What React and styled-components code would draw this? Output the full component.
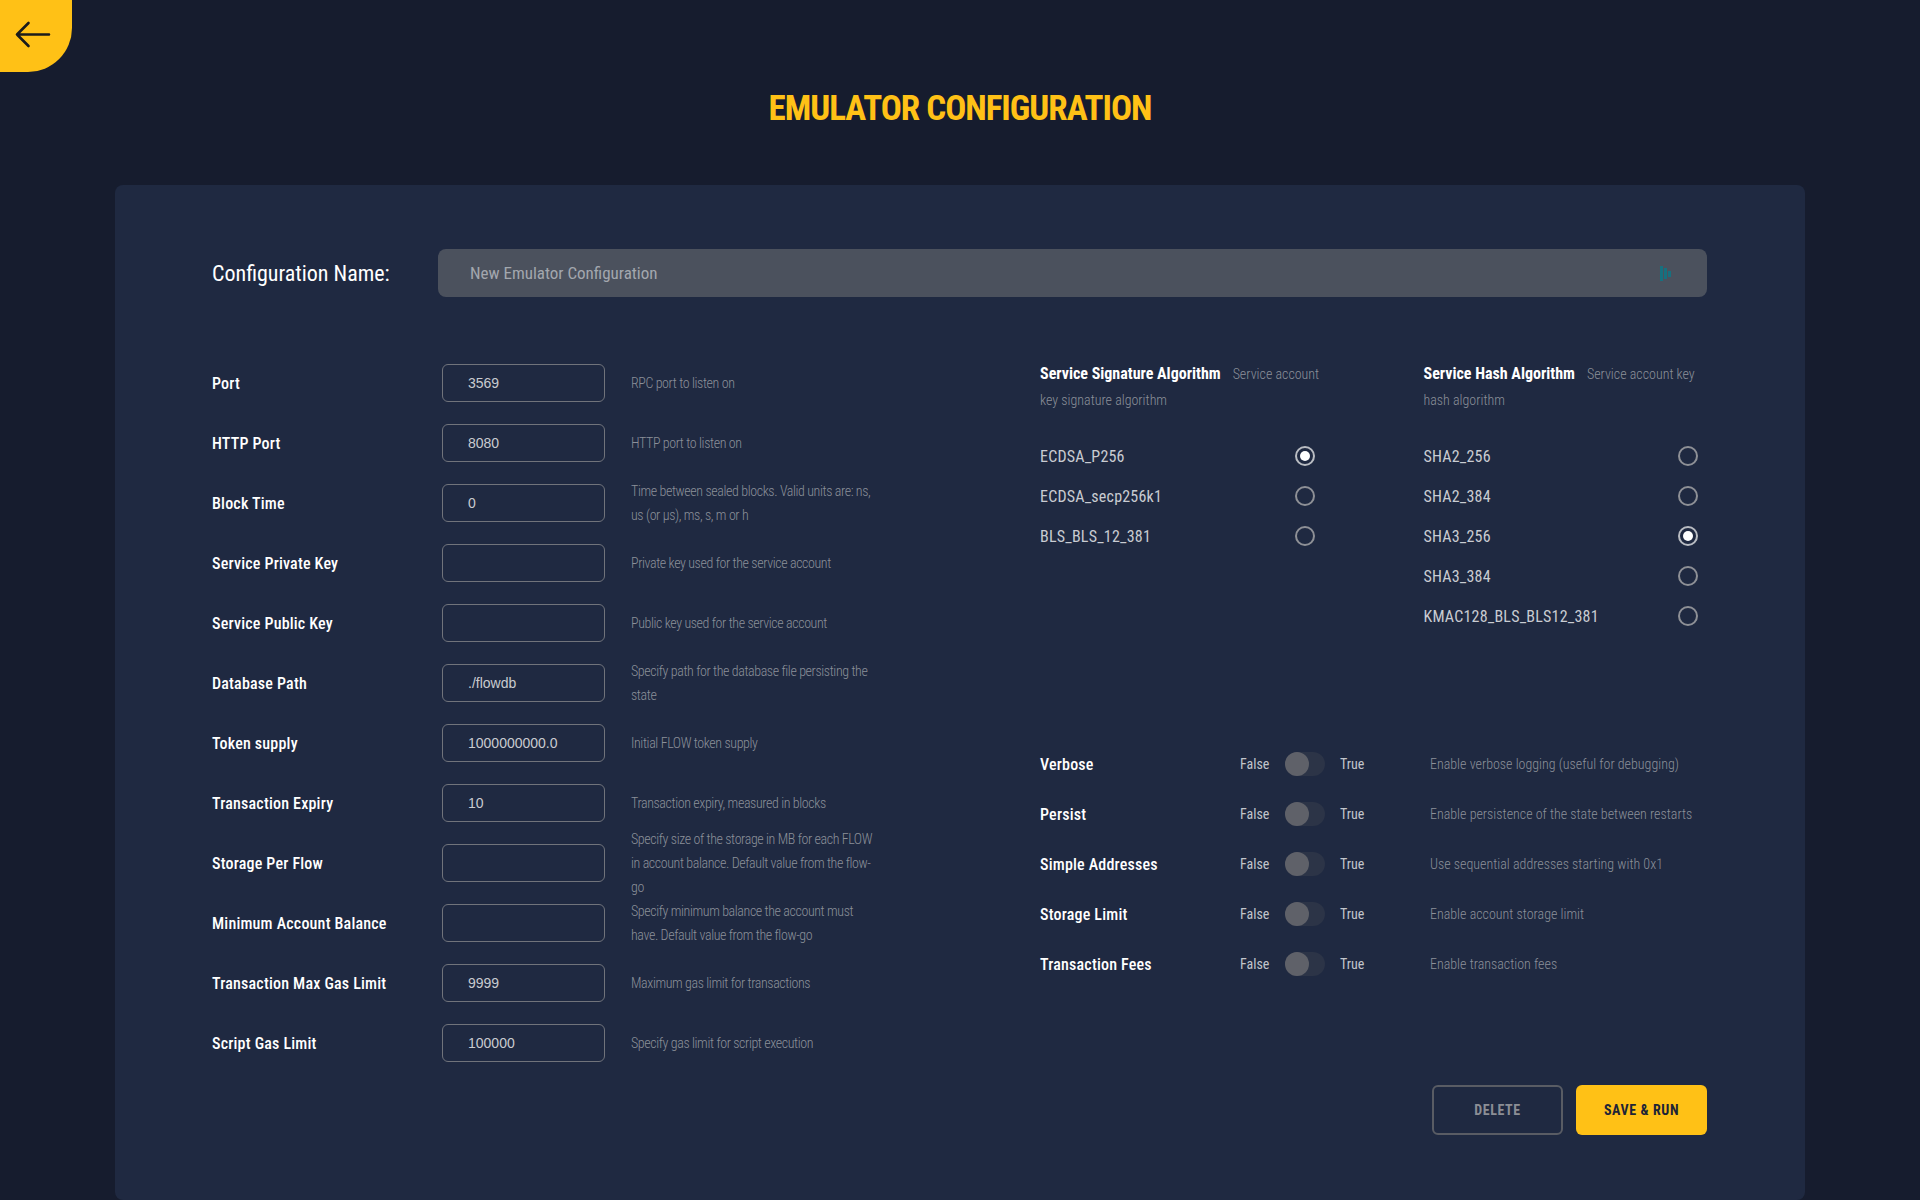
import React from "react";
import styled, { createGlobalStyle } from "styled-components";

const COND = `"Roboto Condensed", "Liberation Sans", sans-serif`;

const Global = createGlobalStyle`
  html, body { margin: 0; padding: 0; }
  body { background: #161c2e; font-family: ${COND}; }
  * { box-sizing: border-box; }
`;

const Page = styled.div`
  position: relative;
  min-height: 1200px;
  display: flex;
  flex-direction: column;
`;

const BackButton = styled.button`
  position: absolute;
  top: 0;
  left: 0;
  width: 72px;
  height: 72px;
  border: none;
  padding: 0;
  background: #ffc116;
  border-bottom-right-radius: 44px;
  display: flex;
  align-items: flex-start;
  justify-content: flex-start;
  cursor: pointer;
`;

const Header = styled.header`
  padding-top: 88px;
  height: 185px;
  display: flex;
  justify-content: center;
`;

const Title = styled.h1`
  margin: 0;
  font-family: ${COND};
  font-weight: 700;
  font-size: 35px;
  line-height: 42px;
  letter-spacing: -1px;
  color: #ffc116;
`;

const Panel = styled.main`
  margin: 0 115px;
  background: #1f2941;
  border-radius: 8px;
  padding: 64px 98px 65px 97px;
`;

const NameRow = styled.div`
  display: flex;
  align-items: center;
  height: 48px;
`;

const NameLabel = styled.label`
  width: 226px;
  flex: none;
  color: #ffffff;
  font-size: 22px;
  white-space: nowrap;
`;

const NameInputWrap = styled.div`
  position: relative;
  flex: 1;
  height: 48px;
  background: #4b515d;
  border-radius: 8px;
  display: flex;
  align-items: center;
  padding: 0 32px;
`;

const NameText = styled.span`
  color: #a3a7ae;
  font-size: 17px;
`;

const KeyBadge = styled.svg`
  position: absolute;
  right: 35px;
  top: 17px;
`;

const Body = styled.div`
  margin-top: 64px;
  display: grid;
  grid-template-columns: 828px 1fr;
  align-items: start;
`;

const FieldList = styled.div`
  padding-top: 3px;
  display: flex;
  flex-direction: column;
  gap: 22px;
`;

const FieldRow = styled.div`
  display: flex;
  align-items: center;
  height: 38px;
`;

const FieldLabel = styled.label`
  width: 230px;
  flex: none;
  color: #ffffff;
  font-size: 16px;
  font-weight: 500;
  letter-spacing: 0.2px;
  white-space: nowrap;
`;

const TextBox = styled.div`
  width: 163px;
  flex: none;
  height: 38px;
  border: 1px solid #70737b;
  border-radius: 6px;
  display: flex;
  align-items: center;
  padding: 0 25px;
  color: #c9cbd0;
  font-family: "Liberation Sans", Arial, sans-serif;
  font-size: 14px;
`;

const Help = styled.p`
  width: 277px;
  flex: none;
  margin: 0;
  padding-left: 26px;
  color: #8b9099;
  font-weight: 300;
  font-size: 14px;
  letter-spacing: -0.4px;
  line-height: 24px;
`;

const RightCol = styled.div`
  display: flex;
  flex-direction: column;
`;

const AlgoGrid = styled.div`
  display: grid;
  grid-template-columns: 1fr 1fr;
  column-gap: 100px;
`;

const AlgoHead = styled.div`
  line-height: 26px;
  height: 52px;
`;

const AlgoTitle = styled.span`
  color: #ffffff;
  font-weight: 700;
  font-size: 16px;
  margin-right: 12px;
`;

const AlgoDesc = styled.span`
  color: #8b9099;
  font-weight: 300;
  font-size: 14px;
`;

const OptionList = styled.div`
  margin-top: 23px;
  display: flex;
  flex-direction: column;
`;

const Option = styled.label`
  height: 40px;
  display: flex;
  align-items: center;
  justify-content: space-between;
  padding-right: 9px;
  color: #c9ccd2;
  font-size: 16px;
  letter-spacing: 0.2px;
`;

const Radio = styled.span`
  width: 20px;
  height: 20px;
  border-radius: 50%;
  border: 2px solid ${(p) => (p.$on ? "#b9bcc2" : "#8e9096")};
  display: flex;
  align-items: center;
  justify-content: center;
  &::after {
    content: "";
    width: 10px;
    height: 10px;
    border-radius: 50%;
    background: #ffffff;
    display: ${(p) => (p.$on ? "block" : "none")};
  }
`;

const ToggleList = styled.div`
  margin-top: 103px;
  display: flex;
  flex-direction: column;
`;

const ToggleRow = styled.div`
  height: 50px;
  display: grid;
  grid-template-columns: 200px 45px 55px 90px 1fr;
  align-items: center;
`;

const ToggleLabel = styled.span`
  color: #ffffff;
  font-size: 16px;
  font-weight: 500;
  letter-spacing: 0.2px;
`;

const BoolText = styled.span`
  color: #c2c5cb;
  font-size: 14px;
`;

const Switch = styled.span`
  width: 40px;
  height: 24px;
  border-radius: 12px;
  background: #2c3447;
  display: flex;
  align-items: center;
  &::before {
    content: "";
    width: 24px;
    height: 24px;
    border-radius: 50%;
    background: #5f6169;
  }
`;

const ToggleHelp = styled.span`
  color: #8b9099;
  font-weight: 300;
  font-size: 14px;
`;

const Actions = styled.div`
  margin-top: 23px;
  display: flex;
  justify-content: flex-end;
  gap: 13px;
`;

const Button = styled.button`
  width: 131px;
  height: 50px;
  border-radius: 6px;
  font-family: ${COND};
  font-weight: 700;
  font-size: 14px;
  letter-spacing: 0.6px;
  cursor: pointer;
  border: ${(p) => (p.$primary ? "none" : "2px solid #595c64")};
  background: ${(p) => (p.$primary ? "#ffc116" : "transparent")};
  color: ${(p) => (p.$primary ? "#1d2437" : "#8b8e95")};
`;

const fields = [
  ["Port", "3569", "RPC port to listen on"],
  ["HTTP Port", "8080", "HTTP port to listen on"],
  ["Block Time", "0", "Time between sealed blocks. Valid units are: ns, us (or µs), ms, s, m or h"],
  ["Service Private Key", "", "Private key used for the service account"],
  ["Service Public Key", "", "Public key used for the service account"],
  ["Database Path", "./flowdb", "Specify path for the database file persisting the state"],
  ["Token supply", "1000000000.0", "Initial FLOW token supply"],
  ["Transaction Expiry", "10", "Transaction expiry, measured in blocks"],
  ["Storage Per Flow", "", "Specify size of the storage in MB for each FLOW in account balance. Default value from the flow-go"],
  ["Minimum Account Balance", "", "Specify minimum balance the account must have. Default value from the flow-go"],
  ["Transaction Max Gas Limit", "9999", "Maximum gas limit for transactions"],
  ["Script Gas Limit", "100000", "Specify gas limit for script execution"],
];

const algos = [
  {
    title: "Service Signature Algorithm",
    desc: "Service account key signature algorithm",
    options: ["ECDSA_P256", "ECDSA_secp256k1", "BLS_BLS_12_381"],
    selected: 0,
  },
  {
    title: "Service Hash Algorithm",
    desc: "Service account key hash algorithm",
    options: ["SHA2_256", "SHA2_384", "SHA3_256", "SHA3_384", "KMAC128_BLS_BLS12_381"],
    selected: 2,
  },
];

const toggles = [
  ["Verbose", "Enable verbose logging (useful for debugging)"],
  ["Persist", "Enable persistence of the state between restarts"],
  ["Simple Addresses", "Use sequential addresses starting with 0x1"],
  ["Storage Limit", "Enable account storage limit"],
  ["Transaction Fees", "Enable transaction fees"],
];

export default function App() {
  return (
    <Page>
      <Global />
      <BackButton aria-label="Back">
        <svg width="72" height="72" viewBox="0 0 72 72">
          <path
            d="M49 34.5H17M28.5 23L17 34.5L28.5 46"
            fill="none"
            stroke="#1b1b1b"
            strokeWidth="2.6"
            strokeLinecap="round"
            strokeLinejoin="round"
          />
        </svg>
      </BackButton>
      <Header>
        <Title>EMULATOR CONFIGURATION</Title>
      </Header>
      <Panel>
        <NameRow>
          <NameLabel>Configuration Name:</NameLabel>
          <NameInputWrap>
            <NameText>New Emulator Configuration</NameText>
            <KeyBadge width="12" height="15" viewBox="0 0 12 15">
              <rect x="0" y="0" width="3" height="15" fill="#17707f" />
              <rect x="4" y="2" width="3" height="11" fill="#17707f" />
              <rect x="8" y="5" width="3" height="6" fill="#17707f" />
            </KeyBadge>
          </NameInputWrap>
        </NameRow>
        <Body>
          <FieldList>
            {fields.map(([label, value, help]) => (
              <FieldRow key={label}>
                <FieldLabel>{label}</FieldLabel>
                <TextBox>{value}</TextBox>
                <Help>{help}</Help>
              </FieldRow>
            ))}
          </FieldList>
          <RightCol>
            <AlgoGrid>
              {algos.map((a) => (
                <div key={a.title}>
                  <AlgoHead>
                    <AlgoTitle>{a.title}</AlgoTitle>
                    <AlgoDesc>{a.desc}</AlgoDesc>
                  </AlgoHead>
                  <OptionList>
                    {a.options.map((o, i) => (
                      <Option key={o}>
                        {o}
                        <Radio $on={i === a.selected} />
                      </Option>
                    ))}
                  </OptionList>
                </div>
              ))}
            </AlgoGrid>
            <ToggleList>
              {toggles.map(([label, help]) => (
                <ToggleRow key={label}>
                  <ToggleLabel>{label}</ToggleLabel>
                  <BoolText>False</BoolText>
                  <Switch />
                  <BoolText>True</BoolText>
                  <ToggleHelp>{help}</ToggleHelp>
                </ToggleRow>
              ))}
            </ToggleList>
          </RightCol>
        </Body>
        <Actions>
          <Button>DELETE</Button>
          <Button $primary>SAVE &amp; RUN</Button>
        </Actions>
      </Panel>
    </Page>
  );
}
